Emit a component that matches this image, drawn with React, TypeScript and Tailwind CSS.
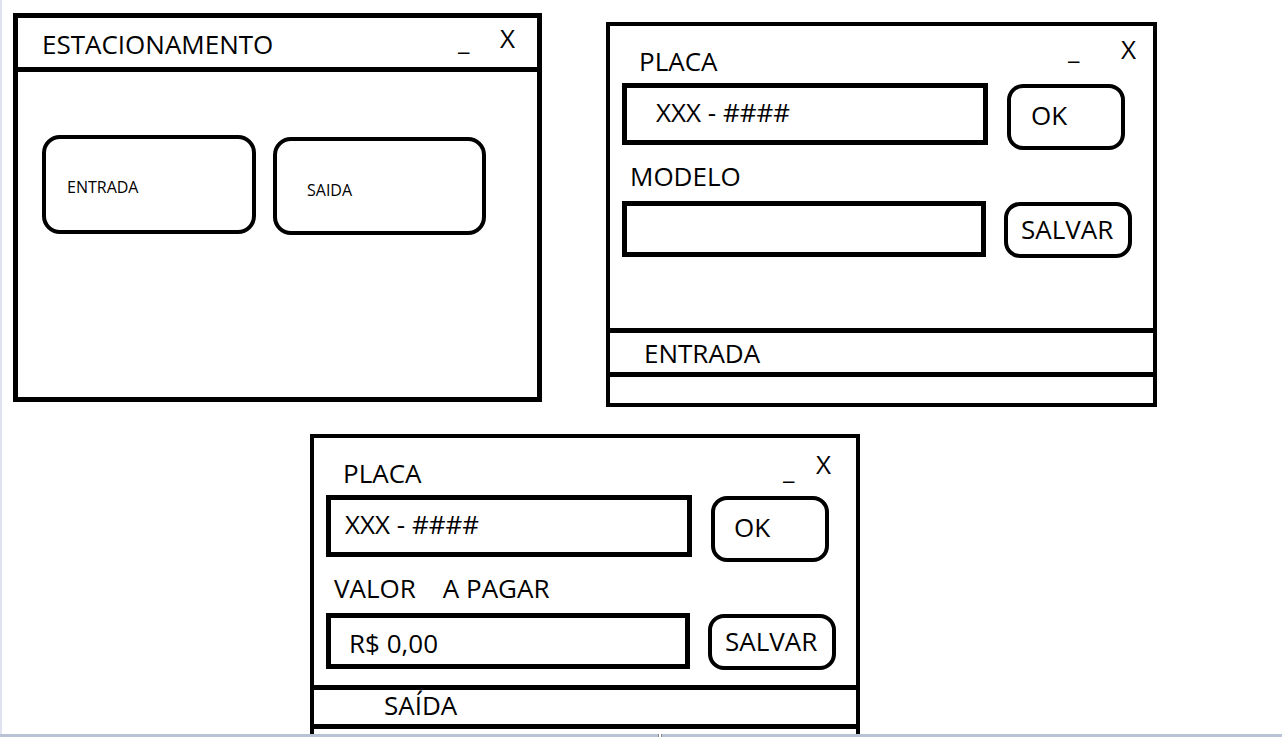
import React from "react";

const txt = "font-['Open_Sans',sans-serif] text-black leading-none";

type WinControlsProps = {
  minTop: string;
  xTop: string;
  gap: string;
  right: string;
};

const WinControls: React.FC<WinControlsProps> = ({ minTop, xTop, gap, right }) => (
  <div className={`ml-auto flex items-start ${right}`}>
    <span className={`${txt} text-[26px] w-[14px] ${minTop} ${gap}`}>_</span>
    <span className={`${txt} text-[26px] w-[15px] ${xTop}`}>X</span>
  </div>
);

type FormWindowProps = {
  pos: string;
  size: string;
  label: string;
  placaPad: string;
  value: string;
  valuePad: string;
  okPad: string;
  bodyHeight: string;
  footer: string;
  footerPad: string;
  footerHeight: string;
  controls: WinControlsProps;
  lastHeight: string;
};

const FormWindow: React.FC<FormWindowProps> = (p) => (
  <div className={`absolute ${p.pos} ${p.size} border-4 border-black bg-white flex flex-col`}>
    <div className={`${p.bodyHeight} flex flex-col`}>
      <div className="h-[57px] flex items-start">
        <span className={`${txt} text-[26px] ml-[29px] mt-[22px]`}>PLACA</span>
        <WinControls {...p.controls} />
      </div>
      <div className="ml-[12px] flex items-start">
        <div className={`w-[366px] h-[62px] border-[5px] border-black flex items-center pb-[5px] ${p.placaPad}`}>
          <span className={`${txt} text-[26px]`}>XXX - ####</span>
        </div>
        <button className={`ml-[19px] mt-[1px] w-[118px] h-[66px] border-4 border-black rounded-[16px] flex items-center pb-[5px] ${p.okPad}`}>
          <span className={`${txt} text-[26px]`}>OK</span>
        </button>
      </div>
      <div className="h-[51px] pt-[13px] pl-[20px]">
        <span className={`${txt} text-[26px] whitespace-pre`}>{p.label}</span>
      </div>
      <div className="ml-[12px] flex items-start">
        <div className={`w-[364px] h-[56px] border-[5px] border-black flex items-center pt-[4px] ${p.valuePad}`}>
          <span className={`${txt} text-[26px]`}>{p.value}</span>
        </div>
        <button className="ml-[18px] mt-[1px] w-[128px] h-[56px] border-4 border-black rounded-[16px] flex items-center pl-[13px] pb-[2px]">
          <span className={`${txt} text-[26px]`}>SALVAR</span>
        </button>
      </div>
    </div>
    <div className={`${p.footerHeight} border-t-[5px] border-black flex items-center ${p.footerPad}`}>
      <span className={`${txt} text-[26px]`}>{p.footer}</span>
    </div>
    <div className={`${p.lastHeight} border-t-[5px] border-black`} />
  </div>
);

export default function App() {
  return (
    <div className="w-full h-[737px] overflow-hidden bg-white flex flex-col">
      <div className="flex-1 min-h-0 flex">
        <div className="w-[2px] bg-[#e1e2ef]" />
        <div className="relative flex-1 overflow-hidden">
          {/* main window */}
          <div className="absolute left-[11px] top-[13px] w-[529px] h-[389px] border-[5px] border-black flex flex-col">
            <div className="h-[54px] border-b-[5px] border-black flex items-start">
              <span className={`${txt} text-[26px] ml-[24px] mt-[13px]`}>ESTACIONAMENTO</span>
              <WinControls minTop="mt-[9px]" xTop="mt-[7px]" gap="mr-[28px]" right="mr-[22px]" />
            </div>
            <div className="pt-[63px] pl-[24px] flex items-start gap-[17px]">
              <button className="w-[214px] h-[99px] border-4 border-black rounded-[18px] flex items-center pl-[21px] pt-[4px]">
                <span className={`${txt} text-[16px]`}>ENTRADA</span>
              </button>
              <button className="mt-[2px] w-[213px] h-[98px] border-4 border-black rounded-[18px] flex items-center pl-[30px] pt-[8px]">
                <span className={`${txt} text-[16px]`}>SAIDA</span>
              </button>
            </div>
          </div>

          {/* entrada */}
          <FormWindow
            pos="left-[604px] top-[22px]"
            size="w-[551px] h-[385px]"
            label="MODELO"
            placaPad="pl-[29px]"
            value=""
            valuePad="pl-[18px]"
            okPad="pl-[20px]"
            bodyHeight="h-[302px]"
            footer="ENTRADA"
            footerPad="pl-[34px]"
            footerHeight="h-[44px]"
            lastHeight="flex-1"
            controls={{ minTop: "mt-[10px]", xTop: "mt-[10px]", gap: "mr-[39px]", right: "mr-[17px]" }}
          />

          {/* saida */}
          <FormWindow
            pos="left-[308px] top-[434px]"
            size="w-[550px] h-[340px]"
            label={"VALOR    A PAGAR"}
            placaPad="pl-[14px]"
            value="R$ 0,00"
            valuePad="pl-[18px]"
            okPad="pl-[19px]"
            bodyHeight="h-[247px]"
            footer="SAÍDA"
            footerPad="pl-[70px] pb-[4px]"
            footerHeight="h-[39px]"
            lastHeight="flex-1"
            controls={{ minTop: "mt-[18px]", xTop: "mt-[13px]", gap: "mr-[19px]", right: "mr-[25px]" }}
          />
        </div>
      </div>
      <div className="h-[3px] bg-[#b9c3d6] flex">
        <div className="ml-[658px] w-[4px] h-[3px] bg-white border-l border-r border-[#8a8a8a]" />
      </div>
    </div>
  );
}
